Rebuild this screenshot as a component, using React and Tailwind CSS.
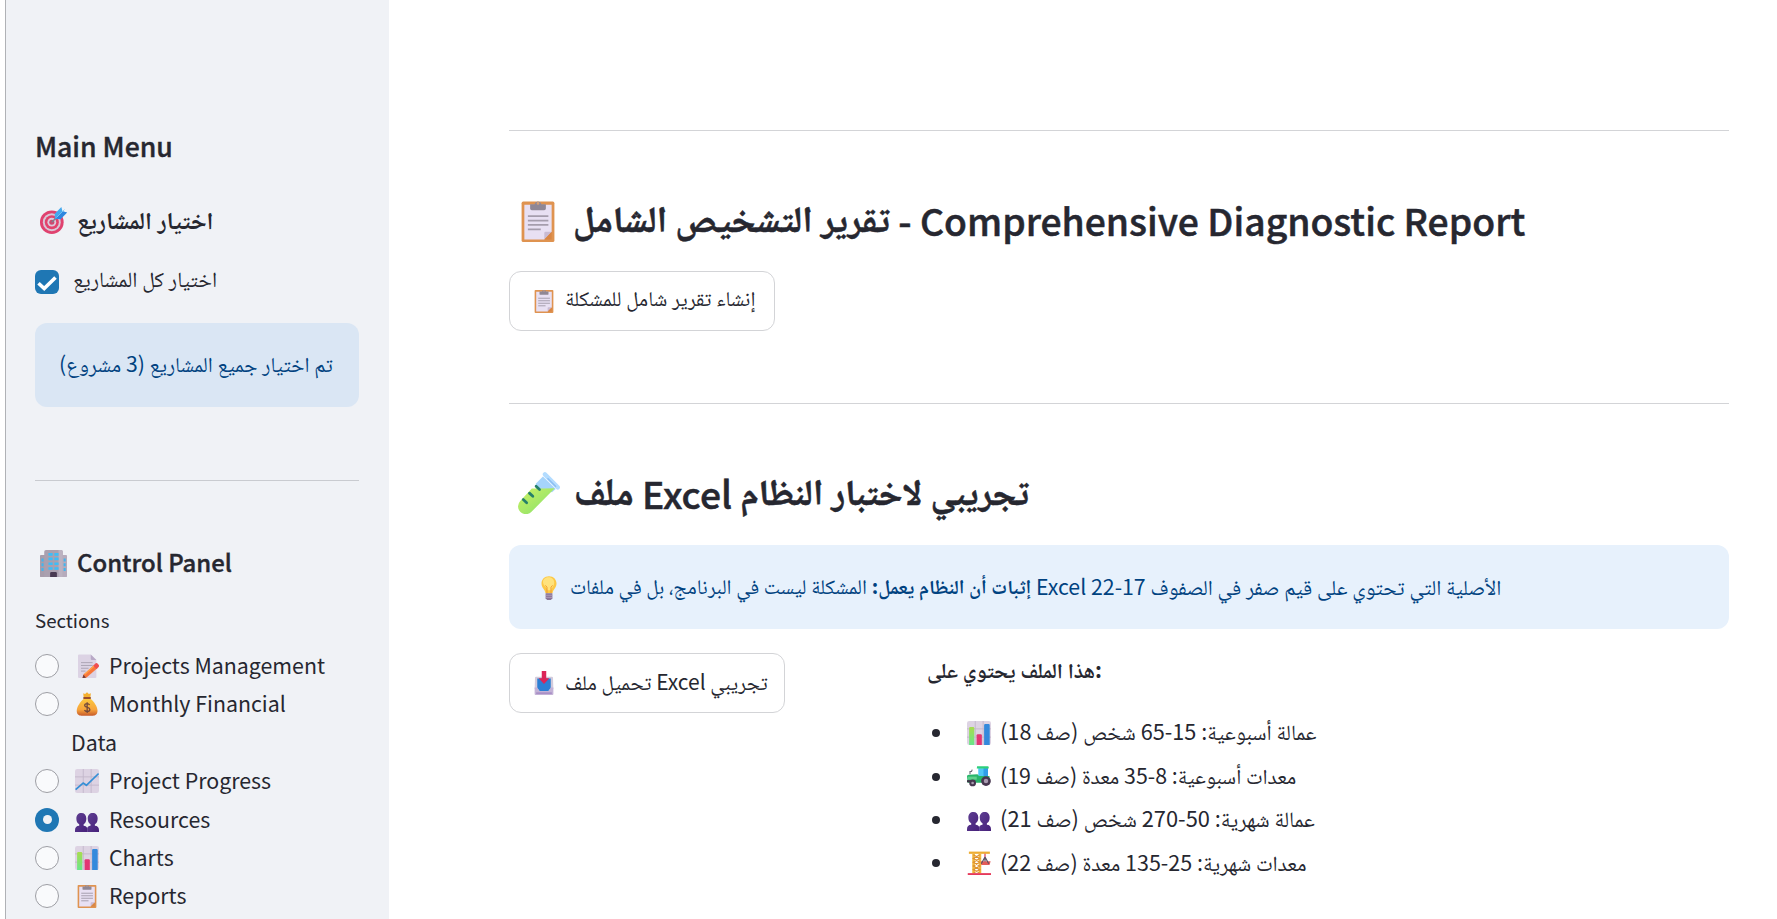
import React, { useId } from 'react';

const FONT = "font-['Noto_Sans_CJK_SC','Noto_Naskh_Arabic','Noto_Sans_Arabic','DejaVu_Sans',sans-serif]";

function Icon({ className = '', children }) {
  return (
    <svg viewBox="0 0 32 32" aria-hidden="true" className={'inline-block shrink-0 ' + className}>
      {children}
    </svg>
  );
}

function Clipboard({ className }) {
  return (
    <Icon className={className}>
      <rect x="3.5" y="1.2" width="25" height="30.8" rx="1.2" fill="#df9350" />
      <path d="M5.6 3.6h20.8v20.6l-5.6 5.8H5.600z" fill="#e8e0f3" />
      <path d="M26.4 24.2l-5.600 5.800v-4.800a1 1 0 0 1 1-1z" fill="#c9bbd3" />
      <path d="M26.4 24.2v5.800h-5.600z" fill="#d98644" />
      <path d="M10 3.2h3.4a2.7 2.7 0 0 1 5.2 0H22v3.3a1.3 1.3 0 0 1-1.3 1.3h-9.4A1.3 1.3 0 0 1 10 6.500z" fill="#8f8795" />
      <circle cx="16" cy="2.6" r="1" fill="#d7a173" />
      <path d="M8.3 12.3h15.600M8.3 15.7h15.600M8.3 19h15.600M8.3 22.4h9.800" stroke="#a59dad" strokeWidth="1.3" />
    </Icon>
  );
}

function Target({ className }) {
  return (
    <Icon className={className}>
      <circle cx="14" cy="18" r="14" fill="#e0426f" />
      <circle cx="14" cy="18" r="10.6" fill="#d9c8d8" />
      <circle cx="14" cy="18" r="8.3" fill="#e2436d" />
      <circle cx="14" cy="18" r="5.2" fill="#dccbdc" />
      <circle cx="14" cy="18" r="3" fill="#cf4a70" />
      <path d="M14.5 17.5L22 10" stroke="#7d8290" strokeWidth="1.8" strokeLinecap="round" />
      <path d="M17.500 8L25.300 0l1.300 4.900L32 6.400l-7.800 8-6.700-.6z" fill="#45a9ee" />
      <path d="M18.500 13.500l8.100-8.600L32 6.400l-7.800 8z" fill="#2f86de" />
      <path d="M19.500 12.500l9.500-9.500" stroke="#7cc8f6" strokeWidth="1" />
    </Icon>
  );
}

function Office({ className }) {
  return (
    <Icon className={className}>
      <rect x="0" y="6" width="7" height="26" rx="1" fill="#a79dab" />
      <rect x="25" y="6" width="7" height="26" rx="1" fill="#b6abbc" />
      <path d="M7 0h18a2 2 0 0 1 2 2v30H5V2a2 2 0 0 1 2-2z" fill="#aaa0af" />
      <path d="M22 0h3a2 2 0 0 1 2 2v30h-5z" fill="#bcb2c1" />
      <path d="M10 3.5h5v3.2h-5zM17 3.5h5v3.2h-5zM10 9h5v3.2h-5zM17 9h5v3.2h-5zM10 14.7h5v3.2h-5zM17 14.7h5v3.2h-5zM10 20.3h5v3.2h-5zM17 20.3h5v3.2h-5z" fill="#3dbdf8" />
      <path d="M1.8 10h2.4v3.5H1.8zM1.8 15.7h2.4v3.5H1.8zM1.8 21.4h2.4v3.5H1.8zM28 10h2.4v3.5H28zM28 15.7h2.4v3.5H28zM28 21.4h2.4v3.5H28z" fill="#41b6ee" />
      <path d="M12 32v-4.500a1.500 1.500 0 0 1 1.500-1.500h5a1.500 1.500 0 0 1 1.500 1.500V32z" fill="#493a52" />
    </Icon>
  );
}

function Memo({ className }) {
  return (
    <Icon className={className}>
      <path d="M4 2a1.500 1.500 0 0 1 1.500-1.500H21L28.500 8v22.500A1.500 1.500 0 0 1 27 32H5.500A1.500 1.500 0 0 1 4 30.500z" fill="#dcd3e4" />
      <path d="M21 .5L28.500 8H22.500A1.500 1.500 0 0 1 21 6.500z" fill="#b8a9c6" />
      <path d="M8 11.500h15.500M8 15.300h15.500M8 19h10M8 22.800h6" stroke="#a79fb0" strokeWidth="1.200" />
      <path d="M11 27.500L25.500 14.500l4.300 4.600L15 31.500l-5 .5z" fill="#f8763a" />
      <path d="M24.300 15.600l2.500-2.500a2.500 2.500 0 0 1 3.600 0l.8.900a2.500 2.500 0 0 1 0 3.500l-2.400 2.400z" fill="#ef4e50" />
      <path d="M13 27l12-10.700" stroke="#ffa548" strokeWidth="1.500" />
      <path d="M10 32l1.300-4.500 3.400 4.100z" fill="#6b3c3d" />
    </Icon>
  );
}

function MoneyBag({ className }) {
  const id = useId();
  return (
    <Icon className={className}>
      <defs>
        <linearGradient id={id} x1="0" y1="0" x2="0" y2="1">
          <stop offset="0" stopColor="#fbc93e" />
          <stop offset=".65" stopColor="#f7a43c" />
          <stop offset="1" stopColor="#c75b2a" />
        </linearGradient>
      </defs>
      <path d="M11 1.500l2.500 1L16 .3l2.500 2.200 2.700-1L20.500 7h-9z" fill="#f4b030" />
      <path d="M12 8.500h8.500C25 12.500 30 19 30 25c0 5-3 6.500-6 6.500H8.500C5 31.500 2.300 30 2.300 25 2.300 19 7.500 12.500 12 8.500z" fill={`url(#${id})`} />
      <rect x="10.800" y="6.500" width="10.600" height="2.800" rx="1.400" fill="#9a4d2d" />
      <path d="M19.500 17.300c-.7-1.300-1.900-1.800-3.300-1.800-1.900 0-3.300.9-3.300 2.500 0 3.500 6.900 1.700 6.900 5.300 0 1.700-1.500 2.700-3.500 2.700-1.600 0-3-.7-3.700-2M16.200 13.500v14.500" fill="none" stroke="#70483b" strokeWidth="1.700" />
    </Icon>
  );
}

function Grid() {
  return (
    <>
      <rect width="32" height="32" rx="3" fill="#ddd3e3" />
      <path d="M11 0v32M21.500 0v32M0 10.500h32M0 21.500h32" stroke="#c3b7cb" strokeWidth="1.200" />
    </>
  );
}

function Trend({ className }) {
  return (
    <Icon className={className}>
      <Grid />
      <path d="M.8 27.500l10-8.800 4.400 3L31.500 6" fill="none" stroke="#358fd6" strokeWidth="2.300" strokeLinejoin="round" />
    </Icon>
  );
}

function Bars({ className }) {
  const id = useId();
  return (
    <Icon className={className}>
      <defs>
        <linearGradient id={id} x1="0" y1="0" x2="0" y2="1">
          <stop offset="0" stopColor="#a8dc4e" />
          <stop offset="1" stopColor="#69e68b" />
        </linearGradient>
      </defs>
      <Grid />
      <path d="M2.800 32V9.500A1.500 1.500 0 0 1 4.300 8h3.900a1.500 1.500 0 0 1 1.500 1.500V32z" fill={`url(#${id})`} />
      <path d="M12.800 32V19a1.500 1.500 0 0 1 1.500-1.500h4a1.500 1.500 0 0 1 1.500 1.500v13z" fill="#e23673" />
      <path d="M22.800 32V5.500A1.500 1.500 0 0 1 24.300 4h4.500a1.500 1.500 0 0 1 1.500 1.500V32z" fill="#3489dc" />
    </Icon>
  );
}

function People({ className }) {
  const id = useId();
  return (
    <Icon className={className}>
      <defs>
        <linearGradient id={id} x1="0" y1="0" x2="1" y2="1">
          <stop offset="0" stopColor="#5f3f92" />
          <stop offset="1" stopColor="#46207a" />
        </linearGradient>
      </defs>
      <path d="M0 32v-2.500c0-4 2-5.500 5.600-5.800v-2.200C2.800 20 1.800 17.500 1.800 14c0-5 2.700-7.500 6.700-7.500s6.600 2.500 6.600 7.500c0 3.500-1 6-3.600 7.500v2.200c2.700.3 4.300 1.300 4.700 3.300V32z" fill={`url(#${id})`} />
      <path d="M16.200 32v-5c.4-2 2-3 4.500-3.300v-2.200c-2.700-1.500-3.700-4-3.700-7.500 0-5 2.700-7.500 6.600-7.500s6.600 2.500 6.600 7.500c0 3.500-1 6-3.700 7.500v2.200c3.500.3 5.500 1.800 5.500 5.800V32z" fill={`url(#${id})`} />
    </Icon>
  );
}

function TestTube({ className }) {
  const id = useId();
  return (
    <Icon className={className}>
      <defs>
        <linearGradient id={id} x1="0" y1="0" x2="1" y2="1">
          <stop offset="0" stopColor="#cdf163" />
          <stop offset="1" stopColor="#82e06c" />
        </linearGradient>
      </defs>
      <path d="M19 3.500L28.700 13 26 15.500 14 13.500 13.500 9z" fill="#a6d4fb" />
      <path d="M10.500 12.500l8.500 0 9-.2L10.300 30.300A5.900 5.900 0 0 1 1.700 22z" fill={`url(#${id})`} />
      <path d="M20.500 1.800L30.300 11.700" stroke="#b3dcff" strokeWidth="3.300" strokeLinecap="round" />
      <path d="M22.500 4.800l6.500 6.500" stroke="#8bbdf2" strokeWidth="1" />
      <path d="M13.800 10.900l2.600 2.400M8.700 16.100l2.600 2.400M4 21l2.600 2.400" stroke="#26806a" strokeWidth="2.100" strokeLinecap="round" />
    </Icon>
  );
}

function Bulb({ className }) {
  return (
    <Icon className={className}>
      <path d="M16 .3c6 0 10 4.200 10 9.700 0 6-4.500 7.500-5.300 13h-9.400C10.500 17.500 6 16 6 10 6 4.500 10 .3 16 .3z" fill="#fdc845" />
      <path d="M15.500 1.500c5 0 7.500 3.500 7.500 7.500s-3 6-4 10h-5c-.5-4-6-6-6-11 0-4 3.500-6.500 7.500-6.500z" fill="#ffe27c" />
      <path d="M13.300 23v-8l-2-2.500M18.700 23v-8l2-2.500" fill="none" stroke="#f09a2c" strokeWidth="1.300" />
      <path d="M11.500 23h9v6.500L18.500 32h-5l-2-2.500z" fill="#8b7697" />
      <path d="M11.500 25.700h9M11.500 28.500h9" stroke="#b9a6c2" strokeWidth="1" />
    </Icon>
  );
}

function Inbox({ className }) {
  return (
    <Icon className={className}>
      <path d="M5.500 7.500h21a1.500 1.500 0 0 1 1.500 1.500l.5 15h-25L4 9a1.500 1.500 0 0 1 1.500-1.500z" fill="#d3cbdc" />
      <path d="M7 10h18v13l-3 3.500H10L7 23z" fill="#2b7fd4" />
      <path d="M3.500 22H7l3 4.500h12l3-4.500h3.500v8.500A1.500 1.500 0 0 1 27 32H5a1.500 1.500 0 0 1-1.500-1.500z" fill="#c3b2d6" />
      <path d="M5.500 29.500h21" stroke="#a58bc4" strokeWidth="2" />
      <path d="M13 0h6v9.500h4.200L16 17.300 8.800 9.500H13z" fill="#dc2457" />
    </Icon>
  );
}

function Tractor({ className }) {
  return (
    <Icon className={className}>
      <path d="M15 5.500h13v11H15z" fill="#4fc8f4" />
      <path d="M22 5.500h6v11h-6z" fill="#2f9fe8" />
      <path d="M13.500 3h14a1.500 1.500 0 0 1 1.500 1.500V6H13z" fill="#2ecf7b" />
      <path d="M0 16.500c0-1.500 1-2 2.500-2.200L14 13.500l2 2.500h14v6l-8 3H1z" fill="#27b56a" />
      <path d="M1 16.800h12v4H1z" fill="#5fd08c" />
      <path d="M4 13.800V10h2l1-2.500" fill="none" stroke="#6f6977" strokeWidth="1.500" />
      <path d="M0 21.500h8v3H0z" fill="#3d3546" />
      <circle cx="25.300" cy="22.800" r="6.500" fill="#473750" />
      <circle cx="25.300" cy="22.800" r="3" fill="#a99bb0" />
      <circle cx="7.500" cy="25.300" r="4.500" fill="#473750" />
      <circle cx="7.500" cy="25.300" r="1.800" fill="#a99bb0" />
    </Icon>
  );
}

function Crane({ className }) {
  return (
    <Icon className={className}>
      <path d="M2.500.8h28v3h-28z" fill="#edad33" />
      <path d="M7 3.800h3.500v25.700H7zM15.500 3.800H19v25.700h-3.500z" fill="#f3b63c" />
      <path d="M8.500 5l8.500 5-8.500 5 8.500 5-8.500 5 8 4M17 5l-8.500 5 8.500 5-8.500 5 8.500 5-8 4" fill="none" stroke="#dd9232" strokeWidth="1.700" />
      <path d="M24 3.800v5" stroke="#d9364f" strokeWidth="1.600" />
      <path d="M18.500 13.500h13l-1.500 5h-11z" fill="#e24b47" opacity=".9" />
      <path d="M24 8l-5 9M24 8l5 9M24 8v6" stroke="#5e5263" strokeWidth="1.600" />
      <path d="M1 29.500h31V32H1z" fill="#e63a5b" />
    </Icon>
  );
}

const SECTIONS = [
  { icon: Memo, label: 'Projects Management' },
  { icon: MoneyBag, label: 'Monthly Financial Data' },
  { icon: Trend, label: 'Project Progress' },
  { icon: People, label: 'Resources', active: true },
  { icon: Bars, label: 'Charts' },
  { icon: Clipboard, label: 'Reports' },
];

const CONTENTS = [
  { icon: Bars, text: 'عمالة أسبوعية: 15-65 شخص (صف 18)', size: 'text-[21.700px]' },
  { icon: Tractor, text: 'معدات أسبوعية: 8-35 معدة (صف 19)', size: 'text-[21.350px]' },
  { icon: People, text: 'عمالة شهرية: 50-270 شخص (صف 21)', size: 'text-[21.850px]' },
  { icon: Crane, text: 'معدات شهرية: 25-135 معدة (صف 22)', size: 'text-[21.500px]' },
];

function Radio({ active }) {
  return active ? (
    <span className="mt-2 flex size-6 shrink-0 items-center justify-center rounded-full bg-[#1f77b4]">
      <span className="size-[9px] rounded-full bg-[#f0f2f6]" />
    </span>
  ) : (
    <span className="mt-2 size-6 shrink-0 rounded-full border-[1.5px] border-[#9d9ea4] bg-[#f9fafc]" />
  );
}

function Sidebar() {
  return (
    <aside className="ml-[5px] w-[384px] shrink-0 border-l border-[#b0b2b6] bg-[#f0f2f6] pr-[30px] pl-[29px] pt-[128px]">
      <h2 className="text-[26.600px] leading-9 font-medium [-webkit-text-stroke:0.4px]">Main Menu</h2>
      <h3 className="mt-[37px] flex h-9 items-center gap-[10px] pl-[5px] text-[24.200px] leading-9 font-bold">
        <Target className="mt-[3px] size-[27px]" />
        <span>اختيار المشاريع</span>
      </h3>
      <label className="mt-[24px] flex h-10 items-center gap-[14px] text-[21.600px] leading-10">
        <span className="mt-px flex size-6 items-center justify-center rounded-md bg-[#1f77b4]">
          <svg viewBox="0 0 24 24" className="size-6">
            <path d="M3.500 13.300l5.700 5.300L20.500 7.500" fill="none" stroke="#fff" strokeWidth="3.600" />
          </svg>
        </span>
        <span className="-mt-1.5">اختيار كل المشاريع</span>
      </label>
      <div className="mt-[22px] flex h-[84px] items-center rounded-xl bg-[#dae6f4] pl-6 text-[21.200px] text-[#004280]">
        <span className="-mt-1 whitespace-nowrap">تم اختيار جميع المشاريع (3 مشروع)</span>
      </div>
      <hr className="mt-[73px] border-[#c9cbd0]" />
      <h3 className="mt-[63px] flex h-9 items-center gap-[10px] pl-[5px] text-[23.900px] leading-9 font-medium [-webkit-text-stroke:0.4px]">
        <Office className="mt-0.5 size-[27px]" />
        <span>Control Panel</span>
      </h3>
      <p className="mt-[27px] text-[18.700px] leading-[26px]">Sections</p>
      <ul className="mt-[13px]">
        {SECTIONS.map(({ icon: Glyph, label, active }) => (
          <li key={label} className="flex gap-[12px] text-[21.350px] leading-[38.400px]">
            <Radio active={active} />
            <span className="w-[258px]">
              <Glyph className="mr-[10px] ml-[4px] size-6 align-[-4px]" />
              {label}
            </span>
          </li>
        ))}
      </ul>
    </aside>
  );
}

function OutlineButton({ className = '', children }) {
  return (
    <button className={'flex h-[60px] items-center rounded-xl border border-[#d3d4d7] pl-[22px] ' + className}>
      {children}
    </button>
  );
}

export default function App() {
  return (
    <div className={'flex h-[919px] w-full overflow-hidden bg-white text-[#262730] ' + FONT}>
      <Sidebar />
      <main className="flex-1 pr-12 pl-[120px] pt-[130px]">
        <hr className="border-[#d3d4d7]" />
        <h1 className="mt-[61px] flex h-14 items-center gap-[14px] pl-[8px] text-[37.300px] leading-[56px] font-medium whitespace-nowrap [-webkit-text-stroke:0.5px]">
          <Clipboard className="mt-0.5 size-[42px]" />
          <span>
            <span className="align-[4px] text-[36.500px] leading-none font-bold">تقرير التشخيص الشامل</span> - Comprehensive Diagnostic Report
          </span>
        </h1>
        <OutlineButton className="mt-[23px] w-[266px] gap-[9px]">
          <Clipboard className="size-6" />
          <span className="-mt-1.5 text-[21px]">إنشاء تقرير شامل للمشكلة</span>
        </OutlineButton>
        <hr className="mt-[72px] border-[#d3d4d7]" />
        <h1 className="mt-[61px] flex h-14 items-center gap-[14px] pl-[9px] text-[37.200px] leading-[56px] font-medium whitespace-nowrap [-webkit-text-stroke:0.5px]">
          <TestTube className="size-[42px]" />
          <span>
            <span className="align-[4px] text-[38.500px] leading-none font-bold">ملف</span> Excel{' '}
            <span className="align-[4px] text-[36.200px] leading-none font-bold">تجريبي لاختبار النظام</span>
          </span>
        </h1>
        <div className="mt-[24px] flex h-[84px] items-center gap-[9px] rounded-xl bg-[#e7f1fc] pl-7 text-[21.300px] whitespace-nowrap text-[#004280]">
          <Bulb className="mt-0.5 size-6" />
          <span className="-mt-0.5">
            <strong className="align-[1px] text-[19.900px] leading-none">إثبات أن النظام يعمل:</strong>{' '}
            <span className="align-[1px] text-[20.800px] leading-none">المشكلة ليست في البرنامج، بل في ملفات</span> Excel الأصلية التي تحتوي على قيم صفر في الصفوف 17-22
          </span>
        </div>
        <div className="mt-6 flex">
          <div className="w-[418px]">
            <OutlineButton className="w-[276px] gap-[9px]">
              <Inbox className="size-6" />
              <span className="-mt-0.5 text-[21px]">تحميل ملف Excel تجريبي</span>
            </OutlineButton>
          </div>
          <div>
            <p className="-mt-0.5 text-[21.300px] leading-[36px] font-bold">هذا الملف يحتوي على:</p>
            <ul className="mt-[23px]">
              {CONTENTS.map(({ icon: Glyph, text, size }) => (
                <li key={text} className={'flex h-[43.400px] items-center pl-[5px] whitespace-nowrap ' + size}>
                  <span className="mt-[3px] mr-[27px] size-2 rounded-full bg-[#262730]" />
                  <Glyph className="mt-0.5 mr-[9px] size-6" />
                  <span>{text}</span>
                </li>
              ))}
            </ul>
          </div>
        </div>
      </main>
    </div>
  );
}
